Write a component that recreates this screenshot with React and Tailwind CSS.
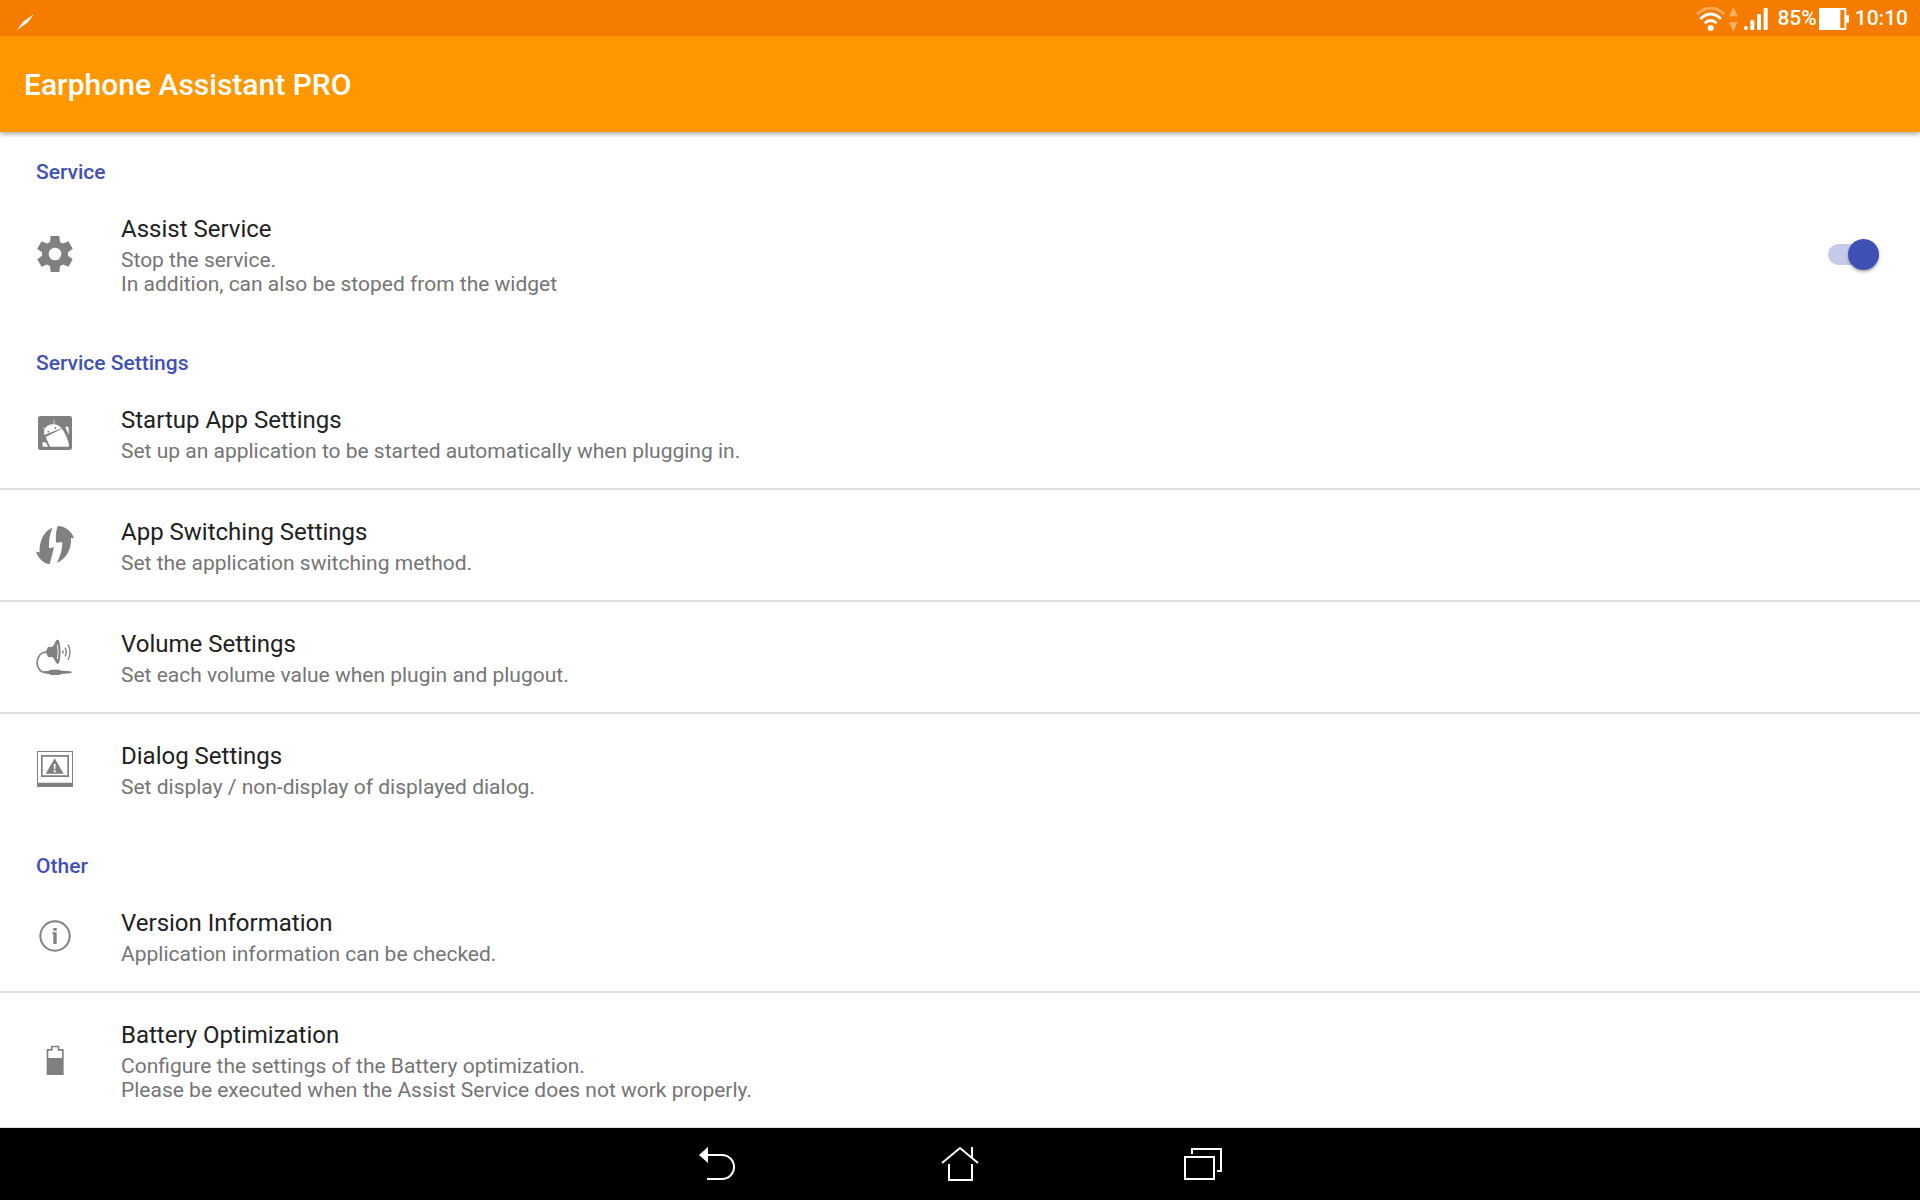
import React, { useState } from "react";

const sections = [
  {
    title: "Service",
    items: [
      {
        title: "Assist Service",
        summary: [
          "Stop the service.",
          "In addition, can also be stoped from the widget",
        ],
        icon: GearIcon,
        toggle: true,
      },
    ],
  },
  {
    title: "Service Settings",
    items: [
      {
        title: "Startup App Settings",
        summary: [
          "Set up an application to be started automatically when plugging in.",
        ],
        icon: RobotIcon,
      },
      {
        title: "App Switching Settings",
        summary: ["Set the application switching method."],
        icon: SwitchIcon,
      },
      {
        title: "Volume Settings",
        summary: ["Set each volume value when plugin and plugout."],
        icon: SpeakerIcon,
      },
      {
        title: "Dialog Settings",
        summary: ["Set display / non-display of displayed dialog."],
        icon: DialogIcon,
      },
    ],
  },
  {
    title: "Other",
    items: [
      {
        title: "Version Information",
        summary: ["Application information can be checked."],
        icon: InfoIcon,
      },
      {
        title: "Battery Optimization",
        summary: [
          "Configure the settings of the Battery optimization.",
          "Please be executed when the Assist Service does not work properly.",
        ],
        icon: BatteryIcon,
      },
    ],
  },
];

function RowIcon({ children }) {
  return (
    <svg
      viewBox="0 0 114 114"
      className="size-[38px] text-[#808080]"
      fill="currentColor"
      aria-hidden="true"
    >
      {children}
    </svg>
  );
}

function GearIcon() {
  return (
    <RowIcon>
      <circle cx="57" cy="57" r="39" />
      {[0, 60, 120, 180, 240, 300].map((angle) => (
        <path
          key={angle}
          d="M41 28L44 3h26l3 25z"
          transform={`rotate(${angle} 57 57)`}
        />
      ))}
      <circle cx="57" cy="57" r="19" fill="#fff" />
    </RowIcon>
  );
}

function RobotIcon() {
  return (
    <RowIcon>
      <rect x="6" y="6" width="102" height="102" rx="7" />
      <g fill="#fff" stroke="#fff" strokeLinecap="round">
        <path
          d="M25 63C20 44 34 31 51 31c12 0 21 5 26 12z"
          stroke="none"
        />
        <path d="M54 32V20M30 47l-8-5" strokeWidth="2" />
        <path d="M29 69l49-25c8 10 18 32 21 50l-1 4H42z" stroke="none" />
        <path d="M88 39c4-4 10-1 10 4v20z" stroke="none" />
        <path d="M19 86c6-5 11-1 13 3l4 9H20z" stroke="none" />
      </g>
      <circle cx="37" cy="53" r="3" />
      <circle cx="58" cy="42" r="3" />
    </RowIcon>
  );
}

function SwitchIcon() {
  return (
    <RowIcon>
      <path d="M50 5C26 12 8 45 11 79L0 78c6 16 20 34 41 37l13-51-15 3C38 46 41 24 50 5z" />
      <path d="M65 0c25 1 42 16 49 37l-9-1c2 35-16 64-42 74 9-17 16-39 16-62l-19 2C59 33 59 16 65 0z" />
    </RowIcon>
  );
}

function SpeakerIcon() {
  return (
    <RowIcon>
      <path d="M29 41l7-14h11C53 25 56 16 59 10c3-6 9-6 11 1 5 20 5 41 0 61-2 7-8 7-11 0-3-6-6-13-12-15H36z" />
      <path
        d="M64 20c3 14 3 29 0 43"
        fill="none"
        stroke="#fff"
        strokeWidth="3"
      />
      <g fill="none" stroke="currentColor">
        <path d="M33 42C-6 42-6 103 29 103h21" strokeWidth="5" />
        <path
          d="M80 37q3 5 0 10M87 29q8 13 0 26M96 20q12 22 0 46"
          strokeWidth="4"
        />
      </g>
      <path d="M25 100l14-2 6-3h25l6 3 28 2q6 3 0 6l-28 2-6 3H45l-6-3-14-2z" />
    </RowIcon>
  );
}

function DialogIcon() {
  return (
    <RowIcon>
      <path fillRule="evenodd" d="M3 3h108v108H3zM6 6v92h102V6z" />
      <path fillRule="evenodd" d="M15 15h84v66H15zM20 20v56h74V20z" />
      <path d="M56 25l27 46H29z" />
      <path d="M53 42h6l-1 16h-4zM53 61h6v6h-6z" fill="#fff" />
    </RowIcon>
  );
}

function InfoIcon() {
  return (
    <RowIcon>
      <circle
        cx="57"
        cy="57"
        r="44"
        fill="none"
        stroke="currentColor"
        strokeWidth="6"
      />
      <path d="M52 33h10v8H52zM52 46h10v35H52zM49 46h5v5h-5z" />
    </RowIcon>
  );
}

function BatteryIcon() {
  return (
    <RowIcon>
      <path
        fillRule="evenodd"
        d="M32 24h13v-10h25v10h13v78H32zM37 29v22h41V29H65v-10H50v10z"
      />
    </RowIcon>
  );
}

function StatusBar() {
  return (
    <div className="flex h-9 items-center justify-between bg-[#f57c00] pr-3 pl-4 text-white">
      <svg viewBox="0 0 20 20" className="mt-2 size-5" fill="currentColor">
        <path d="M1 18L7 10q2-2 4-3l7-5-6 8q-2 2-4 3z" />
      </svg>
      <div className="flex items-center pt-0.5 text-[21px] font-medium">
        <svg
          viewBox="0 0 90 75"
          className="h-[25px] w-[30px]"
          fill="none"
          stroke="currentColor"
          strokeWidth="8"
        >
          <path d="M3 22Q44-16 85 22" opacity="0.35" />
          <path d="M13 36q31-30 62 0M26 49q18-17 36 0" />
          <circle cx="44" cy="63" r="9" fill="currentColor" stroke="none" />
        </svg>
        <svg
          viewBox="0 0 27 75"
          className="ml-[3px] h-[25px] w-[9px] opacity-40"
          fill="currentColor"
        >
          <path d="M0 28L13 0l13 28zM0 46h26L13 74z" />
        </svg>
        <svg
          viewBox="0 0 72 66"
          className="ml-[6px] h-[22px] w-[24px]"
          fill="currentColor"
        >
          <circle cx="6" cy="60" r="6" />
          <rect x="19" y="37" width="12" height="29" rx="2" />
          <rect x="39" y="18" width="12" height="48" rx="2" />
          <rect x="59" y="0" width="12" height="66" rx="2" />
        </svg>
        <span className="ml-[9px]">85%</span>
        <svg
          viewBox="0 0 90 66"
          className="ml-[2px] h-[22px] w-[30px]"
          fill="currentColor"
        >
          <path
            fillRule="evenodd"
            d="M0 0h82v22h8v22h-8v22H0zM64 6v54h12V6z"
          />
        </svg>
        <span className="ml-[6px]">10:10</span>
      </div>
    </div>
  );
}

function SettingRow({ item, divider }) {
  const [checked, setChecked] = useState(true);
  const Icon = item.icon;
  const Row = item.toggle ? "label" : "button";

  return (
    <li className={divider ? "border-b-2 border-[#e0e0e0]" : ""}>
      <Row className="flex w-full items-center px-9 py-[25px] text-left">
        <span className="w-[85px] shrink-0">
          <Icon />
        </span>
        <span className="flex-1">
          <span className="block text-[24px] leading-[34px] text-[#212121]">
            {item.title}
          </span>
          <span className="mt-0.5 block text-[21px] leading-6 text-[#757575]">
            {item.summary.map((line) => (
              <span className="block" key={line}>
                {line}
              </span>
            ))}
          </span>
        </span>
        {item.toggle && (
          <input
            type="checkbox"
            role="switch"
            checked={checked}
            onChange={(e) => setChecked(e.target.checked)}
            className="mr-[5px] flex h-[21px] w-[51px] appearance-none items-center rounded-full bg-[#c5cae9] before:size-[31px] before:shrink-0 before:rounded-full before:bg-[#bdbdbd] before:shadow-[0_2px_3px_rgba(0,0,0,0.3)] checked:justify-end checked:before:bg-[#3f51b5]"
          />
        )}
      </Row>
    </li>
  );
}

function NavBar() {
  return (
    <nav className="box-content flex h-[72px] shrink-0 items-center justify-center border-t border-[#e0e0e0] bg-black text-white">
      <button aria-label="Back" className="flex w-[243px] justify-center">
        <svg
          viewBox="0 0 36 36"
          className="size-9"
          fill="none"
          stroke="currentColor"
          strokeWidth="2"
        >
          <path d="M8 9h15a12 12 0 0 1 0 24H8" />
          <path d="M0 9l9-8v16z" fill="currentColor" stroke="none" />
        </svg>
      </button>
      <button aria-label="Home" className="flex w-[243px] justify-center">
        <svg
          viewBox="0 0 38 36"
          className="h-9 w-[38px]"
          fill="none"
          stroke="currentColor"
          strokeWidth="2"
        >
          <path d="M1 17L19 2l18 15M31 1v11M8 18v16h23V18" />
        </svg>
      </button>
      <button
        aria-label="Recent apps"
        className="flex w-[243px] justify-center"
      >
        <svg
          viewBox="0 0 38 36"
          className="h-9 w-[38px]"
          fill="none"
          stroke="currentColor"
          strokeWidth="2"
        >
          <path d="M1 11h29v22H1zM8 8V3h29v22h-4" />
        </svg>
      </button>
    </nav>
  );
}

export default function App() {
  return (
    <div className="flex min-h-screen flex-col bg-white font-['Roboto',sans-serif]">
      <header className="shadow-[0_2px_5px_rgba(0,0,0,0.35)]">
        <StatusBar />
        <div className="flex h-24 items-center bg-[#ff9800] px-6">
          <h1 className="text-[30px] font-medium text-white">
            Earphone Assistant PRO
          </h1>
        </div>
      </header>

      <main className="flex flex-1 flex-col gap-0.5">
        {sections.map((section) => (
          <section key={section.title}>
            <h2 className="h-[55px] px-9 pt-7 text-[21px] leading-6 font-medium text-[#3f51b5]">
              {section.title}
            </h2>
            <ul>
              {section.items.map((item, i) => (
                <SettingRow
                  item={item}
                  key={item.title}
                  divider={i < section.items.length - 1}
                />
              ))}
            </ul>
          </section>
        ))}
      </main>

      <NavBar />
    </div>
  );
}
